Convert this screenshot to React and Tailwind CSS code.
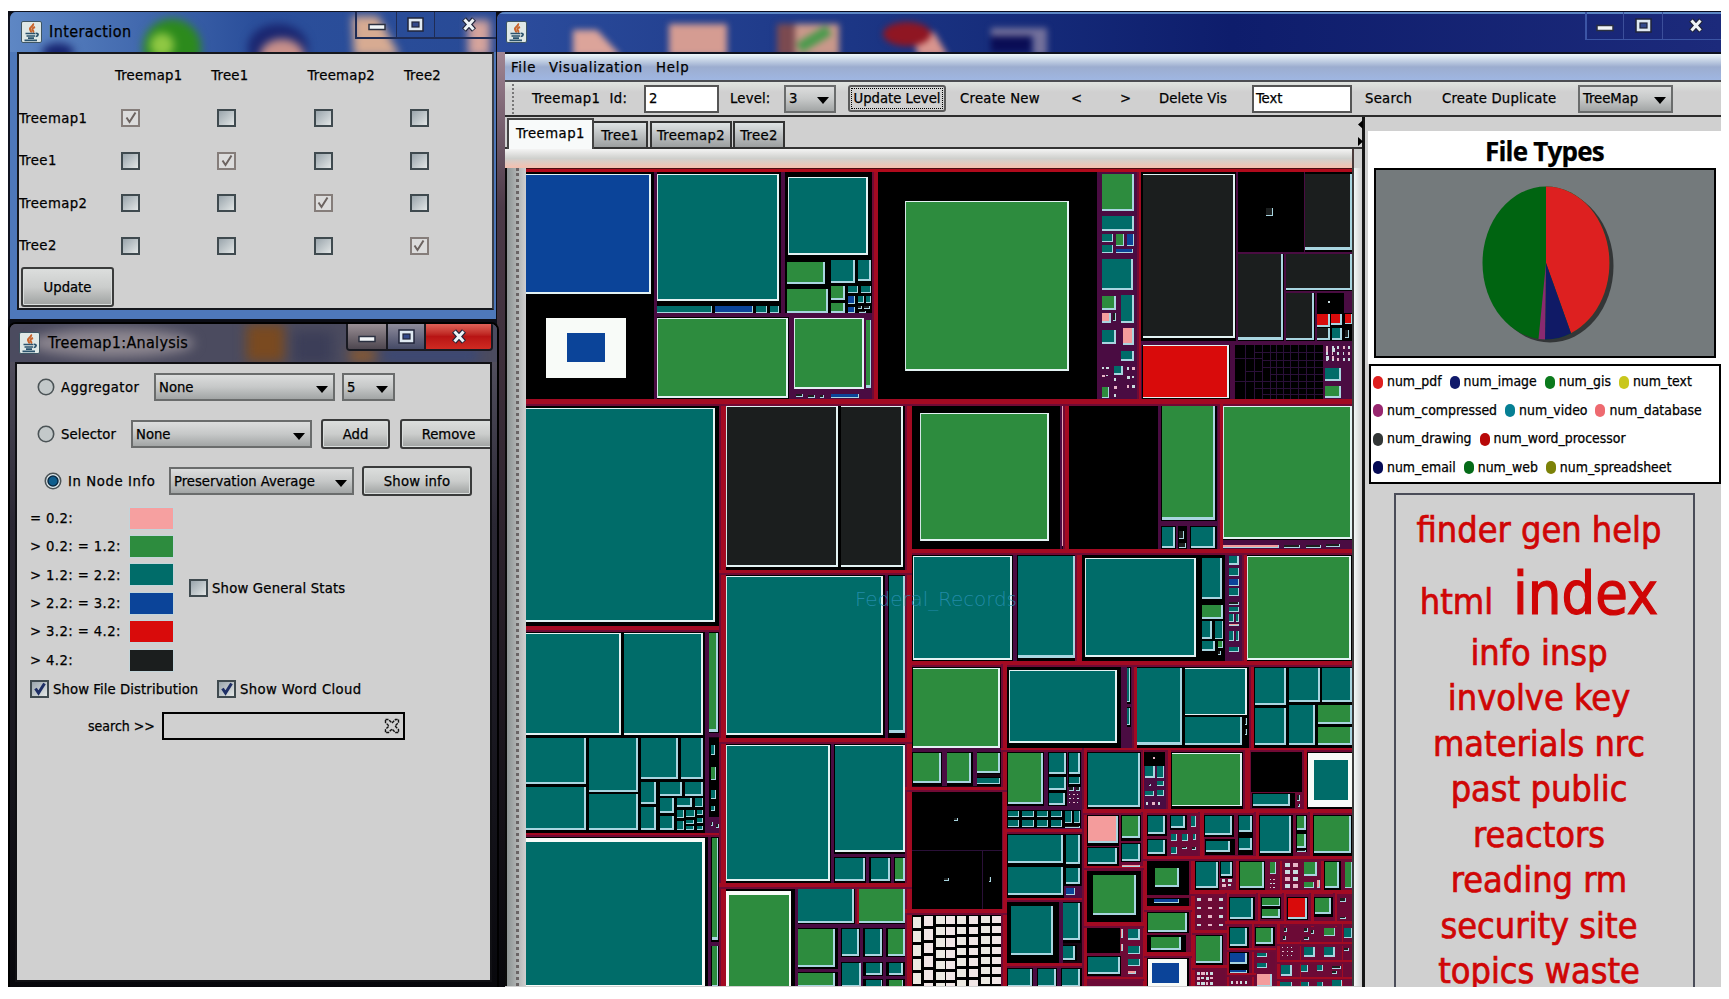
import React from "react";

const COLORS = {
  T: "#006c69",
  G: "#2d8c3e",
  B: "#0b4499",
  R: "#d90b0b",
  D: "#1b1e1e",
  P: "#f49c9c",
  W: "#f4f6f2",
  K: "#000000",
  M: "#4a0c42",
  N: "#6c0a36",
  C: "#a30a22",
};

// Plain bands: colour, left, top, right, bottom
const BANDS = `
K 526 172 654 399|M 654 172 657 399|K 657 172 781 315|M 781 172 785 315|K 785 172 872 313|M 655 313 873 317|K 657 317 789 399|M 789 317 872 399
C 872 172 878 400|K 878 172 1097 399|M 1097 172 1137 399|C 1137 172 1141 400|M 1141 172 1352 399
K 1141 172 1236 341|K 1238 172 1304 252|K 1305 172 1352 252|K 1238 254 1284 341|K 1286 254 1352 291|K 1286 293 1315 341|K 1317 293 1344 313|K 1317 313 1352 341|K 1142 345 1230 399|K 1235 345 1323 399
C 526 399 1352 406|K 526 406 719 626|C 719 406 726 986|K 726 406 905 570|C 905 406 912 986
K 912 406 1060 549|M 1060 406 1062 549|C 1063 406 1069 549|K 1069 406 1158 549|M 1158 406 1218 549|K 1161 406 1217 521|K 1161 526 1176 549|K 1178 526 1187 549|K 1190 526 1217 549|C 1218 404 1223 550|M 1223 406 1352 549|K 1223 406 1352 540
C 912 549 1352 555|K 912 555 1013 662|M 1013 555 1017 662|K 1017 555 1076 662|C 1075 555 1082 664|K 1082 555 1225 661|M 1225 555 1242 661|C 1242 555 1247 664|K 1247 555 1352 661
C 912 661 1352 667|K 912 667 1001 748|M 912 748 1001 752|K 912 752 942 786|M 942 752 947 786|K 947 752 973 786|M 973 752 977 786|K 977 752 1001 774|K 977 777 1001 786
C 1001 664 1007 986|K 1007 667 1121 748|M 1121 667 1132 748|K 1127 667 1131 704|K 1127 707 1131 727|C 1132 667 1137 748|K 1137 667 1249 748|C 1249 667 1254 748|K 1254 667 1352 748|C 1001 748 1352 752
C 526 626 719 632|K 526 632 705 833|M 705 632 709 833|K 709 632 719 733|M 709 733 719 737|K 709 738 719 817|M 709 817 719 833|C 526 833 719 837|K 526 837 719 986|M 708 837 711 986|M 711 942 719 946
C 719 570 912 575|K 726 575 905 738|M 885 575 888 738|C 719 738 912 744|K 726 744 905 883|M 831 744 834 883|M 834 854 905 857|M 866 857 869 883|M 891 857 894 883|C 719 883 912 889
K 726 889 905 986|M 795 889 798 986|C 855 889 859 925|M 798 924 905 928|M 838 928 841 986|M 798 969 838 972|M 860 928 863 986|M 883 928 886 986|M 841 957 905 962|M 863 976 905 979
C 905 787 1007 792|K 912 792 1002 909|C 905 909 1007 915|K 912 915 1001 986
M 1007 752 1082 829|K 1007 752 1044 806|K 1048 752 1067 806|K 1068 752 1081 787|K 1007 810 1081 828|C 1007 829 1087 834|K 1007 834 1081 898|M 1064 886 1082 898|C 1007 898 1087 902|K 1007 902 1059 963|M 1059 902 1063 963|K 1063 902 1081 943|K 1063 945 1077 961|C 1007 963 1087 968|K 1007 968 1082 986|M 1033 968 1037 986|M 1057 968 1061 986
C 1082 748 1087 986`;

// Sub-groups in the dense corner: colour, left, top, right, bottom
const DENSE = `
N 1087 752 1352 986|K 1087 752 1141 809|K 1144 752 1165 766|M 1143 766 1166 809|K 1171 752 1243 809|K 1251 752 1302 792|K 1252 793 1295 808|K 1307 752 1352 809
K 1087 815 1119 846|K 1121 815 1141 841|K 1087 847 1119 866|K 1121 843 1141 862|K 1147 815 1167 836|K 1147 839 1167 857|K 1170 815 1187 830|K 1204 815 1234 837|K 1205 839 1235 855|K 1238 815 1253 855|K 1259 815 1293 856|K 1296 815 1307 852|K 1313 815 1352 856
K 1087 871 1141 922|K 1147 861 1189 895|K 1147 898 1189 906|K 1147 912 1189 933|K 1147 935 1186 953|K 1147 957 1189 986|K 1087 928 1120 953|K 1087 956 1121 976|K 1195 861 1219 890|K 1220 861 1233 878|K 1239 861 1265 890|K 1324 861 1341 890|K 1196 935 1223 965|K 1229 897 1255 920|K 1261 897 1281 919|K 1287 897 1308 920|K 1314 897 1333 917|K 1229 927 1249 948|K 1255 927 1275 946|K 1229 952 1249 974
C 1141 750 1144 813|C 1166 750 1171 812|C 1243 750 1250 812|C 1302 750 1307 812|C 1083 809 1352 815|C 1141 812 1147 986|C 1198 812 1204 858|C 1254 812 1259 858|C 1308 812 1313 858|C 1143 856 1352 861|C 1084 866 1144 870
C 1189 861 1195 986|C 1234 861 1239 892|C 1278 861 1282 892|C 1319 861 1324 892|C 1190 890 1352 896|C 1084 922 1144 928|C 1144 906 1192 912|C 1144 952 1192 958|C 1087 977 1144 981|C 1225 893 1229 986|C 1256 893 1260 927|C 1282 893 1286 927|C 1309 893 1314 927|C 1333 893 1337 927|C 1225 921 1352 926|C 1192 930 1227 935|C 1192 965 1227 970|C 1250 924 1254 986|C 1275 924 1280 986|C 1298 940 1301 986|C 1340 924 1343 986|C 1227 948 1276 952|C 1277 942 1352 946|C 1277 960 1352 964|C 1227 973 1256 977|C 1277 977 1352 981`;

// Leaf cells with a lit bottom/right edge: colour, left, top, right, bottom
const CELLS = `
B 526 174 651 294|T 657 174 779 301|T 657 306 712 313|B 715 306 753 313|T 756 306 767 313|T 770 306 779 313|T 788 177 868 255
G 787 262 825 284|G 787 289 828 313|T 831 260 855 283|T 858 260 871 281|G 831 286 845 300|G 831 303 845 313|T 848 286 858 293|T 861 286 871 293|B 848 296 855 304|T 858 296 864 303|T 866 296 871 303|B 848 307 855 313|D 858 306 862 309|D 864 306 870 309|D 859 311 866 313
G 657 318 788 398|G 794 318 864 389|G 866 320 871 388|D 796 394 803 397|D 808 395 815 398|D 820 395 824 398|B 831 394 859 398
G 905 201 1069 371|G 1102 174 1134 211|T 1102 216 1134 231|T 1102 234 1113 242|G 1116 234 1124 246|B 1127 234 1134 246|T 1102 245 1113 253|B 1116 249 1133 253|T 1102 259 1133 290|G 1102 296 1116 310|T 1121 295 1134 323|P 1102 313 1111 323|D 1113 313 1116 321|T 1102 330 1116 344|P 1123 328 1134 345|T 1121 351 1134 361|T 1114 366 1123 375|G 1102 387 1109 398
D 1143 174 1235 338|D 1266 208 1273 216|D 1305 174 1352 250|D 1238 254 1283 340|D 1286 254 1352 290|D 1286 293 1314 340|R 1317 314 1330 327|R 1331 314 1342 325|R 1345 314 1352 324|D 1317 328 1330 340|T 1332 328 1342 340|D 1345 330 1349 338|R 1143 345 1229 398|T 1325 368 1341 381|G 1325 386 1341 398
T 526 408 715 622|D 726 406 838 567|D 841 406 903 567|G 920 413 1049 541|G 1162 406 1215 520|T 1162 527 1175 548|D 1179 531 1184 539|D 1179 543 1186 548|T 1191 527 1215 548|G 1223 406 1352 539|P 1223 545 1279 548|D 1284 545 1300 548|D 1306 545 1321 548|D 1326 544 1340 547
T 526 633 621 735|T 624 633 703 735|G 709 633 718 732|T 526 738 586 784|T 526 787 586 830|T 589 738 638 792|T 589 794 638 830|T 641 738 678 779|T 681 738 703 779|T 641 782 656 804|T 641 807 656 830|T 660 782 682 796|T 685 782 703 796|T 660 798 674 813|T 660 816 674 830|T 677 798 692 807|T 695 798 703 807|T 677 810 684 818|T 686 810 695 817|T 697 810 703 815|T 677 821 684 830|T 686 820 694 824|T 697 818 703 823|T 686 826 694 830|T 697 826 703 830
T 711 745 715 755|G 711 767 716 780|T 711 790 716 799|T 711 806 715 811|D 711 822 713 826|D 716 824 719 828|G 712 838 718 940|G 712 946 718 986
T 726 576 883 735|T 889 576 905 733|T 726 745 830 881|T 835 745 905 852|T 835 858 865 881|T 871 858 890 881|G 895 858 905 881
T 798 889 854 923|G 859 889 905 923|G 798 929 835 967|G 798 973 835 987|T 842 929 859 956|T 865 929 882 956|G 888 929 905 956|T 842 963 861 987|T 866 963 882 975|T 889 963 903 975|T 866 980 882 987|G 889 980 903 987
T 913 556 1012 660|T 1018 556 1075 658|T 1085 558 1196 657|T 1202 558 1222 599|G 1202 605 1223 619|T 1202 621 1212 639|T 1215 621 1223 639|T 1202 641 1215 651|G 1218 641 1223 648|D 1218 651 1221 655
T 1229 556 1239 565|T 1229 568 1239 576|B 1229 579 1239 586|T 1229 588 1239 596|D 1229 602 1239 605|T 1229 607 1239 612|T 1229 614 1234 622|T 1236 614 1239 622|P 1229 624 1239 626|T 1229 631 1234 641|T 1236 631 1239 641|T 1229 647 1239 652|G 1247 556 1351 660
G 913 668 1000 748|T 1009 670 1117 743|T 1127 668 1130 702|T 1127 708 1130 725|T 1137 668 1182 745|T 1185 668 1247 715|T 1185 717 1242 745|D 1245 718 1247 725|D 1245 729 1247 735|T 1255 668 1286 705|T 1289 668 1320 702|T 1322 668 1352 702|T 1255 708 1286 745|T 1289 705 1315 745|G 1318 705 1352 724|G 1318 727 1352 745
G 913 753 941 783|G 947 753 971 783|G 977 753 1000 773|T 977 778 1000 784|D 954 818 958 821|D 944 878 949 881|D 989 877 991 882
G 1008 753 1043 804|T 1049 753 1066 774|T 1069 753 1080 774|T 1049 777 1066 790|T 1069 777 1080 784|T 1049 793 1065 805|D 1069 787 1074 791|D 1076 787 1080 791
T 1008 811 1019 817|T 1022 811 1034 817|T 1037 811 1048 817|T 1051 811 1062 817|T 1065 811 1072 823|T 1074 811 1080 823|T 1008 820 1019 827|T 1022 820 1034 827|T 1037 820 1048 827|T 1051 820 1062 827|D 1065 826 1080 828
T 1008 835 1063 863|T 1066 835 1080 864|T 1008 867 1063 895|T 1066 868 1080 884|B 1066 888 1075 895|T 1011 906 1053 955|T 1063 903 1080 940|T 1063 946 1075 960|T 1008 969 1032 987|T 1038 969 1056 987|T 1062 969 1080 987
T 1088 753 1140 807|T 1145 766 1155 778|T 1157 766 1164 778|T 1157 781 1164 786|D 1149 784 1151 786|T 1145 791 1154 796|T 1157 790 1164 796|G 1172 753 1242 806|T 1253 794 1290 806|D 1297 795 1300 801|D 1298 804 1300 807
P 1088 816 1118 843|G 1122 816 1140 838|T 1088 848 1117 864|T 1122 844 1140 861|P 1122 865 1140 867|T 1148 816 1165 834|T 1171 816 1185 828|T 1191 816 1196 827|T 1148 840 1165 854|T 1171 834 1177 841|T 1182 834 1188 841|T 1193 834 1196 840|T 1171 847 1177 854|D 1182 847 1187 849|D 1192 847 1196 850|T 1205 816 1232 835|T 1239 816 1252 832|T 1206 841 1230 852|T 1239 838 1252 850|T 1260 816 1291 853|G 1297 816 1306 830|G 1297 834 1306 848|D 1297 850 1306 852|G 1314 816 1351 853
G 1093 875 1136 915|G 1155 868 1179 887|B 1154 899 1179 903|G 1148 913 1187 932|G 1151 937 1181 950|T 1088 957 1120 974|P 1121 929 1123 938|P 1121 944 1123 951|T 1128 929 1140 940|T 1128 946 1140 954|T 1128 959 1140 966|P 1128 971 1136 974
T 1196 862 1218 888|T 1221 862 1232 876|G 1240 862 1264 888|G 1270 862 1276 874|G 1304 862 1317 876|G 1304 882 1314 888|G 1325 862 1339 888|G 1345 862 1352 888|P 1317 880 1320 888
G 1196 936 1222 963|T 1230 898 1253 919|G 1262 898 1280 906|G 1262 909 1280 918|R 1288 898 1307 919|G 1315 898 1331 914|D 1340 898 1346 902|D 1340 917 1346 919|T 1230 928 1247 946|G 1256 928 1273 944|G 1324 928 1335 936|T 1344 928 1352 938|B 1230 953 1247 964|B 1230 970 1247 973|T 1257 953 1267 957|T 1257 963 1267 968|P 1257 974 1272 987|T 1304 947 1315 957|T 1324 947 1335 957|D 1344 948 1349 951|T 1281 965 1292 976|T 1301 965 1308 972|T 1317 965 1323 971|D 1332 966 1341 969|D 1332 971 1337 974|D 1284 928 1287 932|D 1283 936 1286 940|D 1304 928 1308 932|D 1311 930 1314 934|D 1304 937 1309 940|T 1280 982 1292 987|T 1301 982 1309 987|T 1317 982 1323 987|T 1332 980 1342 987`;

// Cells set in a broad white frame: colour, frame edges, then inner edges
const FRAMED = [
  ["B", 546, 318, 626, 378, 567, 333, 605, 362],
  ["T", 526, 838, 705, 986, 526, 842, 702, 985],
  ["G", 726, 891, 791, 986, 729, 895, 789, 986],
  ["T", 1308, 753, 1352, 807, 1314, 760, 1348, 800],
  ["B", 1148, 959, 1187, 986, 1152, 963, 1179, 983],
];

const parse = (s) =>
  s.trim().split(/[\n|]/).map((r) => {
    const [c, x1, y1, x2, y2] = r.trim().split(" ");
    return { c, x: +x1, y: +y1, w: x2 - x1, h: y2 - y1 };
  });

const bands = parse(BANDS);
const dense = parse(DENSE);
const cells = parse(CELLS);

function grid(x, y, cols, rows, dx, dy, w, h) {
  const out = [];
  for (let r = 0; r < rows; r++)
    for (let c = 0; c < cols; c++) out.push([x + c * dx, y + r * dy, w + ((r + c) % 2) * 0.6, h - ((r * c) % 2) * 0.6]);
  return out;
}

const TINY = [
  ...grid(1326, 346, 5, 3, 5.5, 6, 1.6, 3.4),
  ...grid(1326, 348, 2, 2, 6, 8, 2.4, 4),
  ...grid(1102, 367, 2, 2, 4, 8, 2, 2),
  ...grid(1114, 378, 1, 3, 4, 8, 2, 3),
  ...grid(1127, 367, 2, 3, 5, 9, 2, 3),
  ...grid(1197, 898, 3, 4, 11, 8.5, 3.6, 2.6),
  ...grid(1285, 863, 2, 4, 8, 7, 4.6, 4.2),
  ...grid(1222, 879, 2, 2, 6, 5, 3, 3),
  ...grid(1270, 879, 2, 3, 3.4, 4, 1.2, 1.2),
  ...grid(1197, 972, 4, 3, 4.4, 5, 2.6, 2.6),
  ...grid(1069, 794, 3, 3, 4, 4, 1.2, 1.4),
  ...grid(1146, 802, 3, 1, 6, 4, 2, 3),
  ...grid(1231, 981, 4, 1, 4.5, 4, 1.6, 3),
  ...grid(1282, 947, 3, 3, 4.5, 4, 1, 1.2),
  ...grid(1153, 757, 1, 1, 4, 4, 2, 2),
  ...grid(1328, 301, 1, 1, 4, 4, 2, 2),
];

const WHITE_COLS = [
  [913, 917, 14, 7.5], [924, 916, 13.4, 9], [936, 916, 11.2, 8.5], [946, 916, 11.2, 9],
  [957, 916, 10.6, 8.5], [969, 916, 10.6, 8.5], [981, 916, 10.2, 8.5], [992, 916, 10.2, 8.5],
];

function Treemap() {
  return (
    <svg className="block h-[818px] w-[826px] shrink-0" viewBox="526 168 826 818" shapeRendering="crispEdges">
      <rect x="526" y="168" width="826" height="818" fill="#170410" />
      <rect x="526" y="168" width="826" height="4" fill="#b00a1c" />
      <rect x="526" y="168" width="826" height="1" fill="#4a0e12" />
      {[...bands, ...dense].map((b, i) => (
        <g key={i}>
          <rect x={b.x} y={b.y} width={b.w} height={b.h} fill={COLORS[b.c]} />
          {b.c === "C" && b.w > b.h && <rect x={b.x} y={b.y + b.h - 2} width={b.w} height="2" fill="#700a35" />}
          {b.c === "C" && b.h >= b.w && <rect x={b.x} y={b.y} width="2" height={b.h} fill="#700a35" />}
        </g>
      ))}
      <path
        d="M1245 345v54M1254 345v54M1262 345v54M1270 345v54M1276 345v54M1283 345v54M1290 345v54M1298 345v54M1306 345v54M1314 345v54M1235 358h27M1245 371h17M1235 381h27M1254 352h69M1262 360h61M1262 367h61M1270 374h53M1262 381h61M1254 388h69M1262 394h61M912 850h90M982 850v59"
        stroke="#2a1038"
        fill="none"
      />
      {cells.map((c, i) => {
        const big = c.w > 8 && c.h > 8;
        return (
          <g key={i}>
            <rect x={c.x} y={c.y} width={c.w} height={c.h} fill={c.w > 60 && c.h > 40 ? "#e3f2f3" : "#a9d5e0"} />
            <rect
              x={c.x}
              y={c.w > 60 && c.h > 40 ? c.y + 1 : c.y}
              width={Math.max(1, c.w - (c.w > 60 ? 2 : big ? 1.6 : 1.2))}
              height={Math.max(1, c.h - (c.h > 60 ? 3 : big ? 1.6 : 1.2))}
              fill={COLORS[c.c]}
            />
          </g>
        );
      })}
      {FRAMED.map((f, i) => (
        <g key={i}>
          <rect x={f[1]} y={f[2]} width={f[3] - f[1]} height={f[4] - f[2]} fill="#f8fbf8" />
          <rect x={f[5]} y={f[6]} width={f[7] - f[5]} height={f[8] - f[6]} fill={COLORS[f[0]]} />
        </g>
      ))}
      {/* left edges that are lit as well */}
      <path d="M657.500 174v127M657.500 318v80M726.500 406v161M726.500 576v159M726.500 745v136M905.500 201v170M920.500 413v128M913.500 556v104M1223.500 406v133M1247.500 556v104M1009.500 670v73M1085.500 558v99M788.500 177v78M794.500 318v71" stroke="#d5e6e6" strokeWidth="1" />
      <rect x="1062" y="406" width="1" height="140" fill="#e7a5b5" />
      {TINY.map(([x, y, w, h], i) => (
        <rect key={i} x={x} y={y} width={w} height={h} fill={i % 3 ? "#c9dde0" : "#e8b5c8"} />
      ))}
      {WHITE_COLS.flatMap(([x, y, dy, w], k) => {
        const out = [];
        for (let yy = y; yy < 986; yy += dy)
          out.push(<rect key={k + "-" + yy} x={x} y={yy} width={w} height={Math.min(dy - 3, 986 - yy)} fill={k % 2 ? "#f1e6e6" : "#ece9e2"} />);
        return out;
      })}
      <text x="855" y="606" fontSize="20" textLength="162" fill="#2a93b8" fillOpacity="0.8" fontFamily="DejaVu Sans Light, DejaVu Sans, sans-serif" fontWeight="200" style={{ WebkitTextStroke: "0px" }}>
        Federal_Records
      </text>
    </svg>
  );
}

function JavaIcon() {
  return (
    <svg className="h-[22px] w-[21px] shrink-0" viewBox="0 0 21 22">
      <rect x="0.5" y="0.5" width="20" height="21" rx="1.5" fill="#dfe8e6" stroke="#3d5563" />
      <path d="M12 2.500c1.500 2.500-4 3.500-3 6 .4 1 1.400 1.400 1 3M14 6c-2.500 1-3.500 2-2 3.500.7.9.4 1.500-.3 2" fill="none" stroke="#c8642d" strokeWidth="2" />
      <path d="M4.500 12.500h10M5.500 15h8.500M7 17.200h6M3.500 19.400h12.500M15 12.500c3-.5 2.700 2.500-.3 3" fill="none" stroke="#2a526c" strokeWidth="1.700" />
    </svg>
  );
}

function MinGlyph({ fill = "#f2f5f7" }) {
  return (
    <svg className="mt-[4px] h-[8px] w-[18px]" viewBox="0 0 18 8">
      <rect x="1" y="1.500" width="16" height="5" fill={fill} stroke="#2b3040" strokeWidth="1.500" />
    </svg>
  );
}

function MaxGlyph() {
  return (
    <svg className="h-[15px] w-[17px]" viewBox="0 0 17 15">
      <rect x="1" y="1" width="15" height="13" fill="#dfe9f2" stroke="#20253a" strokeWidth="1.500" />
      <rect x="5" y="5" width="7" height="5" fill="#33498a" stroke="#20253a" strokeWidth="1.200" />
    </svg>
  );
}

function CloseGlyph() {
  return (
    <svg className="h-[15px] w-[16px]" viewBox="0 0 16 15">
      <path d="M3 2 13 13M13 2 3 13" stroke="#20253a" strokeWidth="5.500" />
      <path d="M3.500 2.500 12.500 12.500M12.500 2.500 3.500 12.500" stroke="#eef3f6" strokeWidth="3" />
    </svg>
  );
}

function Check({ on, dim }) {
  return (
    <span className={`flex h-[18px] w-[19px] shrink-0 items-center justify-center border-2 ${dim ? "border-[#857d7a] bg-[#dcdcdc]" : "border-[#3f4a4f] bg-linear-to-br from-[#9aa5ac] to-[#e2e6e6]"}`}>
      {on && (
        <svg className="h-[14px] w-[14px]" viewBox="0 0 14 14">
          <path d="M2.500 6.500 5.500 11 11.500 1.500" fill="none" stroke={dim ? "#6c6360" : "#1e2f66"} strokeWidth={dim ? 2 : 3} />
        </svg>
      )}
    </span>
  );
}

function Radio({ on }) {
  return (
    <svg className="h-[18px] w-[18px] shrink-0" viewBox="0 0 18 18">
      <circle cx="9" cy="9" r="7.700" fill={on ? "#e4edf0" : "#c3c9ca"} stroke="#4b5356" strokeWidth="1.600" />
      {on && <circle cx="9" cy="9" r="5" fill="#0e5d8d" stroke="#0a2b45" strokeWidth="1.500" />}
    </svg>
  );
}

function Select({ children, className }) {
  return (
    <span className={`flex h-[28px] shrink-0 items-center justify-between border-2 border-[#6a6c6c] bg-linear-to-b from-[#dcdddd] via-[#c6c8c8] to-[#a2a5a5] pr-[5px] pl-[3px] ${className}`}>
      <span>{children}</span>
      <svg className="mt-1 h-[7px] w-[12px]" viewBox="0 0 12 7"><path d="M0 0h12L6 7z" /></svg>
    </span>
  );
}

function Button({ children, className }) {
  return (
    <span className={`flex shrink-0 items-center justify-center rounded-[3px] border-2 border-[#3a3b3b] bg-linear-to-b from-[#dcdedd] via-[#cbcdcc] via-50% to-[#9fa2a1] shadow-[inset_0_0_0_1px_#d9dddc] ${className}`}>
      {children}
    </span>
  );
}

const names = ["Treemap1", "Tree1", "Treemap2", "Tree2"];

function InteractionWindow() {
  return (
    <section className="relative flex h-[308px] w-[488px] shrink-0 flex-col overflow-hidden rounded-tl-lg border-t border-l-2 border-[#10131f] bg-[#4e78ba]">
      <header className="relative flex h-[40px] shrink-0 items-center bg-linear-to-r from-[#5e87c4] via-[#2b4f9b] to-[#284a96] pl-[11px]">
        <svg className="absolute inset-0 h-full w-full" viewBox="0 0 486 40">
          <g style={{ filter: "blur(4px)" }}>
            <ellipse cx="48" cy="40" rx="16" ry="9" fill="#16236f" />
            <circle cx="162" cy="36" r="29" fill="#2c8a1c" />
            <circle cx="152" cy="33" r="12" fill="#8fc843" />
            <ellipse cx="268" cy="36" rx="30" ry="24" fill="#1a2670" />
            <ellipse cx="272" cy="44" rx="22" ry="17" fill="#c8908a" />
            <path d="M342 4h26l22 40h-46z" fill="#d7ab92" />
            <path d="M458 8h22v36h-22z" fill="#d5a49c" />
          </g>
        </svg>
        <span className="relative flex"><JavaIcon /></span>
        <span className="relative ml-[7px] text-[16px] tracking-[0.4px]">Interaction</span>
        <div className="absolute top-0 right-0 flex h-[27px] w-[141px] border-b-2 border-l-2 border-[#1f2c55]">
          <span className="flex w-[40px] shrink-0 items-center justify-center border-r border-[#1f2c55]"><MinGlyph /></span>
          <span className="flex w-[38px] shrink-0 items-center justify-center border-r border-[#1f2c55]"><MaxGlyph /></span>
          <span className="flex w-[68px] shrink-0 items-center justify-center"><CloseGlyph /></span>
        </div>
      </header>
      <div className="ml-[7px] flex h-[258px] w-[477px] flex-col border-2 border-[#15171c] border-r-[#3b3f48] bg-[#d0d0d0]">
        <div className="flex h-[43px] shrink-0 items-center pl-[96px]">
          {names.map((n) => (
            <span key={n} className="w-[96.300px] shrink-0 tracking-[0.3px]">{n}</span>
          ))}
        </div>
        {names.map((row, r) => (
          <div key={row} className="flex h-[42.500px] shrink-0 items-center">
            <span className="w-[102px] shrink-0 tracking-[0.4px]">{row}</span>
            {names.map((c, i) => (
              <span key={c} className="flex w-[96.300px] shrink-0"><Check on={i === r} dim={i === r} /></span>
            ))}
          </div>
        ))}
        <Button className="ml-[2px] h-[40px] w-[93px]">Update</Button>
      </div>
    </section>
  );
}

const legend = [
  ["= 0.2:", "bg-[#f6a0a0]"],
  ["> 0.2: = 1.2:", "bg-[#2d8c3e]"],
  ["> 1.2: = 2.2:", "bg-[#006c69]"],
  ["> 2.2: = 3.2:", "bg-[#0b4499]"],
  ["> 3.2: = 4.2:", "bg-[#d90b0b]"],
  ["> 4.2:", "bg-[#1b1e1e]"],
];

function AnalysisWindow() {
  return (
    <section className="relative flex h-[667px] w-[491px] shrink-0 flex-col overflow-hidden rounded-t-lg border-t-2 border-r-2 border-l-2 border-black bg-linear-to-b from-[#5b5868] via-[#2a2733] via-30% to-[#08080c]">
      <header className="relative flex h-[38px] shrink-0 items-center bg-[#4b4b5f] pl-[9px]">
        <svg className="absolute inset-0 h-full w-full" viewBox="0 0 487 40">
          <g style={{ filter: "blur(6px)" }}>
            <ellipse cx="95" cy="20" rx="86" ry="15" fill="#8d8790" />
            <path d="M236 0h40v40h-40z" fill="#7a4a20" />
            <path d="M345 26h26v14h-26z" fill="#8a5a30" />
            <path d="M285 8h42v34h-42z" fill="#3c3e58" />
            <path d="M380 26h100v14H380z" fill="#3a4877" />
          </g>
        </svg>
        <span className="relative flex"><JavaIcon /></span>
        <span className="relative ml-[8px] text-[16px] tracking-[0.3px]">Treemap1:Analysis</span>
        <div className="absolute top-0 right-[4px] flex h-[27px] w-[147px] overflow-hidden rounded-b-[4px] border-2 border-t-0 border-[#191a22]">
          <span className="flex w-[40px] items-center justify-center border-r-2 border-[#191a22] bg-linear-to-b from-[#9a8f95] to-[#4e4750]"><MinGlyph /></span>
          <span className="flex w-[38px] items-center justify-center border-r-2 border-[#191a22] bg-linear-to-b from-[#8f8c9c] to-[#454a66]"><MaxGlyph /></span>
          <span className="flex flex-1 items-center justify-center bg-linear-to-b from-[#e06058] via-[#b81414] to-[#d02a22]"><CloseGlyph /></span>
        </div>
      </header>
      <div className="ml-[5px] flex h-[620px] w-[477px] flex-col overflow-hidden border-2 border-[#101014] bg-[#d0d0d0]">
        <div className="mt-[8px] flex h-[30px] shrink-0 items-center pl-[20px]">
          <Radio /><span className="ml-[6px] w-[93px] tracking-[0.4px]">Aggregator</span>
          <Select className="w-[181px]">None</Select>
          <Select className="ml-[7px] w-[53px]">5</Select>
        </div>
        <div className="mt-[17px] flex h-[30px] shrink-0 items-center pl-[20px]">
          <Radio /><span className="ml-[6px] w-[70px] shrink-0 tracking-[0.100px]">Selector</span>
          <Select className="w-[181px]">None</Select>
          <Button className="ml-[9px] h-[30px] w-[69px]">Add</Button>
          <Button className="ml-[10px] h-[30px] w-[97px]">Remove</Button>
        </div>
        <div className="mt-[17px] flex h-[30px] shrink-0 items-center pl-[27px]">
          <Radio on /><span className="ml-[6px] w-[101px] tracking-[0.6px]">In Node Info</span>
          <Select className="w-[185px]">Preservation Average</Select>
          <Button className="ml-[8px] h-[30px] w-[110px] tracking-[0.2px]">Show info</Button>
        </div>
        <div className="mt-[8px] flex shrink-0">
          <div className="flex w-[172px] flex-col pl-[13px]">
            {legend.map(([t, c]) => (
              <div key={t} className="flex h-[28.400px] items-center">
                <span className="w-[100px] tracking-[0.4px]">{t}</span>
                <span className={`h-[21px] w-[43px] outline-1 outline-[#c3d5da] ${c}`} />
              </div>
            ))}
          </div>
          <div className="flex items-center gap-[4px] pb-[2px]">
            <Check /><span className="tracking-[0.2px]">Show General Stats</span>
          </div>
        </div>
        <div className="mt-[1px] flex h-[28px] shrink-0 items-center pl-[13px]">
          <Check on /><span className="ml-[4px] w-[164px] tracking-[0.1px]">Show File Distribution</span>
          <Check on /><span className="ml-[4px] tracking-[0.4px]">Show Word Cloud</span>
        </div>
        <div className="mt-[8px] flex h-[30px] shrink-0 items-center pl-[71px]">
          <span className="w-[74px] text-[14px]">search &gt;&gt;</span>
          <span className="flex h-[28px] w-[243px] items-center justify-end border-2 border-black pr-[3px]">
            <svg className="h-[16px] w-[16px]" viewBox="0 0 16 16">
              <path d="M1.500 1.500h3L8 5l3.500-3.500h3v3L11 8l3.500 3.500v3h-3L8 11l-3.500 3.500h-3v-3L5 8 1.500 4.500z" fill="none" stroke="#111" strokeWidth="1.400" strokeDasharray="3 1" />
            </svg>
          </span>
        </div>
      </div>
    </section>
  );
}

const fileTypes = [
  [["num_pdf", "bg-[#df2020]"], ["num_image", "bg-[#10196b]"], ["num_gis", "bg-[#0b7a1d]"], ["num_text", "bg-[#c9c71c]"]],
  [["num_compressed", "bg-[#98276f]"], ["num_video", "bg-[#067f94]"], ["num_database", "bg-[#ee6a70]"]],
  [["num_drawing", "bg-[#333737]"], ["num_word_processor", "bg-[#b80808]"]],
  [["num_email", "bg-[#050a55]"], ["num_web", "bg-[#056b18]"], ["num_spreadsheet", "bg-[#7c8208]"]],
];

function Cloud() {
  return (
    <div className="mt-[9px] ml-[29px] flex h-[495px] w-[301px] shrink-0 flex-col items-center overflow-hidden border-2 border-b-0 border-[#4a4c58] pr-[11px] text-[35.800px] leading-[45.500px] whitespace-nowrap text-[#cf0606] [-webkit-text-stroke:0.7px_#cf0606]">
      <span className="mt-[12px] shrink-0">finder gen help</span>
      <span className="flex h-[71px] shrink-0 items-end gap-[20px]">
        <span className="leading-[44px]">html</span>
        <span className="text-[59px] leading-[60px] [-webkit-text-stroke:1.200px_#cf0606]">index</span>
      </span>
      <span className="mt-[6px] shrink-0">info insp</span>
      <span className="shrink-0">involve key</span>
      <span className="shrink-0">materials nrc</span>
      <span className="shrink-0">past public</span>
      <span className="shrink-0">reactors</span>
      <span className="shrink-0">reading rm</span>
      <span className="shrink-0">security site</span>
      <span className="shrink-0">topics waste</span>
    </div>
  );
}

function Sidebar() {
  return (
    <aside className="flex h-[870px] w-[356px] shrink-0 flex-col overflow-hidden bg-[#d0d0d0]">
      <div className="mt-[14px] ml-[3px] flex h-[233px] w-[353px] shrink-0 flex-col bg-white">
        <h2 className="h-[37px] pl-[117px] font-['Open_Sans',sans-serif] text-[26px] leading-[40px] font-bold tracking-[-0.8px]">File Types</h2>
        <svg className="ml-[6px] h-[190px] w-[342px]" viewBox="1374 168 342 190">
          <rect x="1375" y="169" width="340" height="188" fill="#747a7c" stroke="#000" strokeWidth="2" />
          <ellipse cx="1550" cy="266" rx="63.500" ry="76.500" fill="#333637" />
          <ellipse cx="1546" cy="263" rx="63.500" ry="76.500" fill="#006411" />
          <path d="M1546 263V186.500A63.500 76.500 0 0 1 1571 333.300Z" fill="#dd2020" />
          <path d="M1546 263 1571 333.300A63.500 76.500 0 0 1 1545 339.500Z" fill="#101a66" />
          <path d="M1546 263 1545 339.500A63.500 76.500 0 0 1 1538.500 339Z" fill="#8a2a70" />
        </svg>
      </div>
      <div className="ml-[4px] flex h-[120px] w-[352px] shrink-0 flex-col border-2 border-black bg-white pt-[2px] text-[13.900px] tracking-normal">
        {fileTypes.map((row, i) => (
          <div key={i} className="flex h-[29px] items-center gap-[8px] pl-[2px]">
            {row.map(([t, c]) => (
              <span key={t} className="flex items-center gap-[4px]">
                <i className={`h-[13px] w-[10px] rounded-full ${c}`} />
                <span>{t}</span>
              </span>
            ))}
          </div>
        ))}
      </div>
      <Cloud />
    </aside>
  );
}

function MainWindow() {
  return (
    <section className="flex h-[976px] w-[1224px] shrink-0 flex-col overflow-hidden rounded-tl-lg border-t border-[#0a0d20] bg-linear-to-b from-[#b79aa8] via-[#4c3a48] via-20% to-[#07070b] pl-[8px]">
      <header className="relative -ml-[8px] flex h-[40px] shrink-0 items-center bg-linear-to-r from-[#2c4d9d] via-[#0e1d6c] via-60% to-[#1c2a7b] pl-[9px]">
        <svg className="absolute inset-0 h-full w-full" viewBox="0 0 1224 40">
          <path d="M0 0h1224v2H0z" fill="#5c86c4" />
          <g style={{ filter: "blur(3px)" }}>
            <path d="M76 18h24l24 26H76z" fill="#dca49a" />
            <path d="M172 12h58v32h-58z" fill="#d59c92" />
            <path d="M280 12h62v32h-62z" fill="#c9988a" />
            <path d="M280 12h18v32h-18z" fill="#7b4a50" />
            <path d="M302 36 332 18" stroke="#4a9a4c" strokeWidth="11" />
            <path d="M415 20h22l14 24h-30z" fill="#d9958e" />
            <ellipse cx="410" cy="22" rx="24" ry="12" fill="#8f1622" />
            <path d="M494 16h56v28h-14V24h-42z" fill="#74719b" />
            <path d="M494 24h40v16h-40z" fill="#0a0d55" />
          </g>
        </svg>
        <span className="relative flex"><JavaIcon /></span>
        <div className="absolute top-0 right-0 flex h-[28px] w-[136px] border-b border-l-2 border-[#3c55a5]">
          <span className="flex w-[37px] shrink-0 items-center justify-center border-r border-[#3c4f9a]"><MinGlyph /></span>
          <span className="flex w-[39px] shrink-0 items-center justify-center border-r border-[#3c4f9a]"><MaxGlyph /></span>
          <span className="flex w-[65px] shrink-0 items-center justify-center"><CloseGlyph /></span>
        </div>
      </header>
      <nav className="flex h-[30px] shrink-0 items-center border-t-2 border-b-2 border-[#0e1220] border-b-[#4b4d52] bg-linear-to-b from-[#eef7fa] via-[#9cadcf] via-50% to-[#9fb6e2] pl-[6px] tracking-[0.800px]">
        <span className="w-[38px]">File</span>
        <span className="w-[107px]">Visualization</span>
        <span>Help</span>
      </nav>
      <div className="flex h-[35px] shrink-0 items-center border-b-2 border-[#2c2c2c] bg-linear-to-b from-[#e0e4e0] to-[#d0d0d0] to-30% pl-[7px] whitespace-pre">
        <span className="h-[30px] border-l-2 border-dotted border-[#777]" />
        <span className="ml-[18px] w-[112px] tracking-[0.400px]">Treemap1  Id:</span>
        <span className="flex h-[28px] w-[75px] items-center border-2 border-[#555] bg-white pl-[3px]">2</span>
        <span className="ml-[11px] w-[54px] tracking-[0.2px]">Level:</span>
        <Select className="w-[52px]">3</Select>
        <span className="ml-[12px] flex h-[27px] w-[98px] items-center justify-center rounded-[3px] border-2 border-[#5a5a5a] outline-1 -outline-offset-4 outline-dotted outline-black">Update Level</span>
        <span className="ml-[14px] w-[111px] tracking-[0.300px]">Create New</span>
        <span className="w-[49px]">&lt;</span>
        <span className="w-[39px]">&gt;</span>
        <span className="w-[93px] tracking-[0.100px]">Delete Vis</span>
        <span className="flex h-[28px] w-[100px] items-center border-2 border-[#555] bg-white pl-[2px]">Text</span>
        <span className="ml-[13px] w-[77px] tracking-[0.3px]">Search</span>
        <span className="w-[136px] tracking-[0.2px]">Create Duplicate</span>
        <Select className="w-[95px]">TreeMap</Select>
      </div>
      <div className="flex shrink-0">
        <div className="flex h-[870px] w-[857px] flex-col bg-[#d0d0d0]">
          <div className="flex h-[32px] shrink-0 items-end border-b-2 border-[#333] pl-[2px]">
            <span className="-mb-[2px] flex h-[31px] w-[87px] items-center justify-center border-2 border-b-0 border-[#444] bg-[#f8fafa] pb-[3px] tracking-[0.5px]">Treemap1</span>
            <span className="flex h-[26px] w-[54px] items-center justify-center border-2 border-l-0 border-b-0 border-[#333] bg-linear-to-b from-[#dfe3e4] to-[#9c9fa0] tracking-[0.4px]">Tree1</span>
            <span className="ml-[2px] flex h-[26px] w-[82px] items-center justify-center border-2 border-b-0 border-[#333] bg-linear-to-b from-[#dfe3e4] to-[#9c9fa0] tracking-[0.4px]">Treemap2</span>
            <span className="ml-[1px] flex h-[26px] w-[52px] items-center justify-center border-2 border-b-0 border-[#333] bg-linear-to-b from-[#dfe3e4] to-[#9c9fa0] tracking-[0.4px]">Tree2</span>
          </div>
          <div className="flex min-h-0 flex-1 flex-col">
            <div className="flex h-[19px] w-[849px] shrink-0 border-r-2 border-[#4a3b3b] bg-linear-to-b from-[#f4f4f4] via-[#cfd0cd] via-50% to-[#f5bfae]" />
            <div className="flex">
              <div className="flex h-[818px] w-[21px] shrink-0 border-l-2 border-[#0a0a0a] bg-linear-to-r from-[#8d9494] to-[#cfcfcf]">
                <span className="ml-[9px] border-l-[3px] border-dotted border-[#6a6465]" />
              </div>
              <Treemap />
              <div className="h-[818px] w-[10px] border-l-2 border-[#3d3d3d] bg-linear-to-r from-[#f3f8f8] to-[#cfcfcf]" />
            </div>
          </div>
        </div>
        <div className="flex h-[870px] w-[3px] flex-col bg-[#161616]">
          <svg className="-ml-[4px] h-[32px] w-[7px]" viewBox="0 0 7 32">
            <path d="M5 3v9L0 7.500zM0 20v9l5-4.500z" />
          </svg>
        </div>
        <Sidebar />
      </div>
    </section>
  );
}

export default function App() {
  return (
    <div className="h-[999px] w-[1729px] overflow-hidden bg-white pt-[11px] pl-[8px] font-['DejaVu_Sans_Condensed','DejaVu_Sans',sans-serif] text-[14.700px] leading-none text-black [-webkit-text-stroke:0.25px]">
      <main className="flex h-[976px] w-[1713px] overflow-hidden bg-[#0b0d16]">
        <div className="flex w-[489px] shrink-0 flex-col gap-[3px]">
          <InteractionWindow />
          <AnalysisWindow />
        </div>
        <MainWindow />
      </main>
    </div>
  );
}
